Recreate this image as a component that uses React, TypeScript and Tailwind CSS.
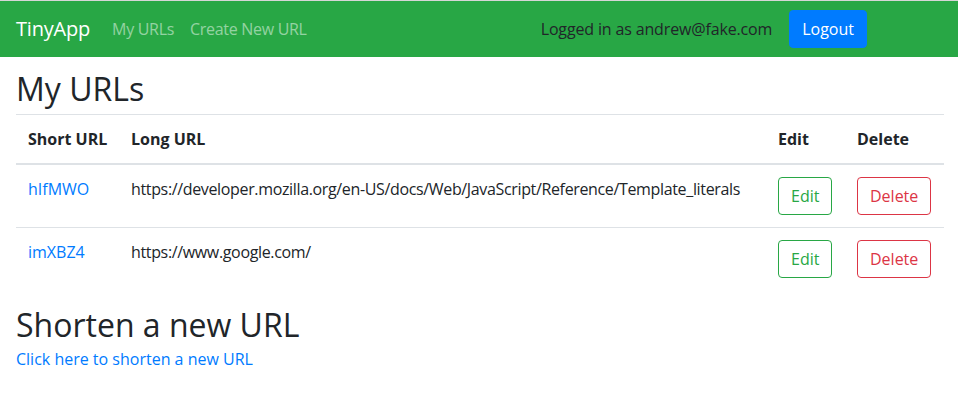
import React from "react";

const urls = [
  {
    id: "hIfMWO",
    long: "https://developer.mozilla.org/en-US/docs/Web/JavaScript/Reference/Template_literals",
  },
  { id: "imXBZ4", long: "https://www.google.com/" },
];

const Navbar = () => (
  <nav className="flex h-[56px] items-center bg-[#28a745] px-4">
    <a href="#" className="mr-[14px] text-[20px] leading-[30px] tracking-[-0.2px] text-white">
      TinyApp
    </a>
    <a href="#" className="px-2 tracking-[-0.3px] text-white/50">
      My URLs
    </a>
    <a href="#" className="px-2 tracking-[-0.3px] text-white/50">
      Create New URL
    </a>
    <div className="ml-auto mr-[75px] flex items-center gap-[17px]">
      <span className="tracking-[-0.15px] text-[#212529]">Logged in as andrew@fake.com</span>
      <button className="rounded border border-[#007bff] bg-[#007bff] px-3 py-[6px] leading-6 text-white">
        Logout
      </button>
    </div>
  </nav>
);

const App = () => {
  return (
    <div className="min-h-screen border-t border-[#d6d6d6] bg-white font-['Open_Sans',sans-serif] text-[16px] leading-6 text-[#212529]">
      <Navbar />
      <main className="pl-4 pr-[14px]">
        <h2 className="mt-[13px] mb-[6px] text-[32px] leading-[1.2] font-medium">My URLs</h2>
        <table className="mb-4 w-full table-fixed border-collapse text-left">
          <thead>
            <tr className="border-t border-b-2 border-[#dee2e6]">
              <th className="w-[103px] whitespace-nowrap p-3 font-bold">Short URL</th>
              <th className="whitespace-nowrap p-3 font-bold">Long URL</th>
              <th className="w-[79px] p-3 font-bold">Edit</th>
              <th className="w-[99px] p-3 font-bold">Delete</th>
            </tr>
          </thead>
          <tbody>
            {urls.map((u, i) => (
              <tr key={u.id} className={i > 0 ? "border-t border-[#dee2e6]" : ""}>
                <td className="p-3 align-top">
                  <a href="#" className="text-[#007bff]">
                    {u.id}
                  </a>
                </td>
                <td className="whitespace-nowrap p-3 align-top tracking-[-0.35px]">{u.long}</td>
                <td className="p-3 align-top">
                  <button className="rounded border border-[#28a745] px-3 py-[6px] leading-6 text-[#28a745]">
                    Edit
                  </button>
                </td>
                <td className="p-3 align-top">
                  <button className="rounded border border-[#dc3545] px-3 py-[6px] leading-6 text-[#dc3545]">
                    Delete
                  </button>
                </td>
              </tr>
            ))}
          </tbody>
        </table>
        <h2 className="mb-[2px] text-[32px] leading-[1.2] font-medium">Shorten a new URL</h2>
        <a href="#" className="text-[#007bff]">
          Click here to shorten a new URL
        </a>
      </main>
    </div>
  );
};

export default App;
